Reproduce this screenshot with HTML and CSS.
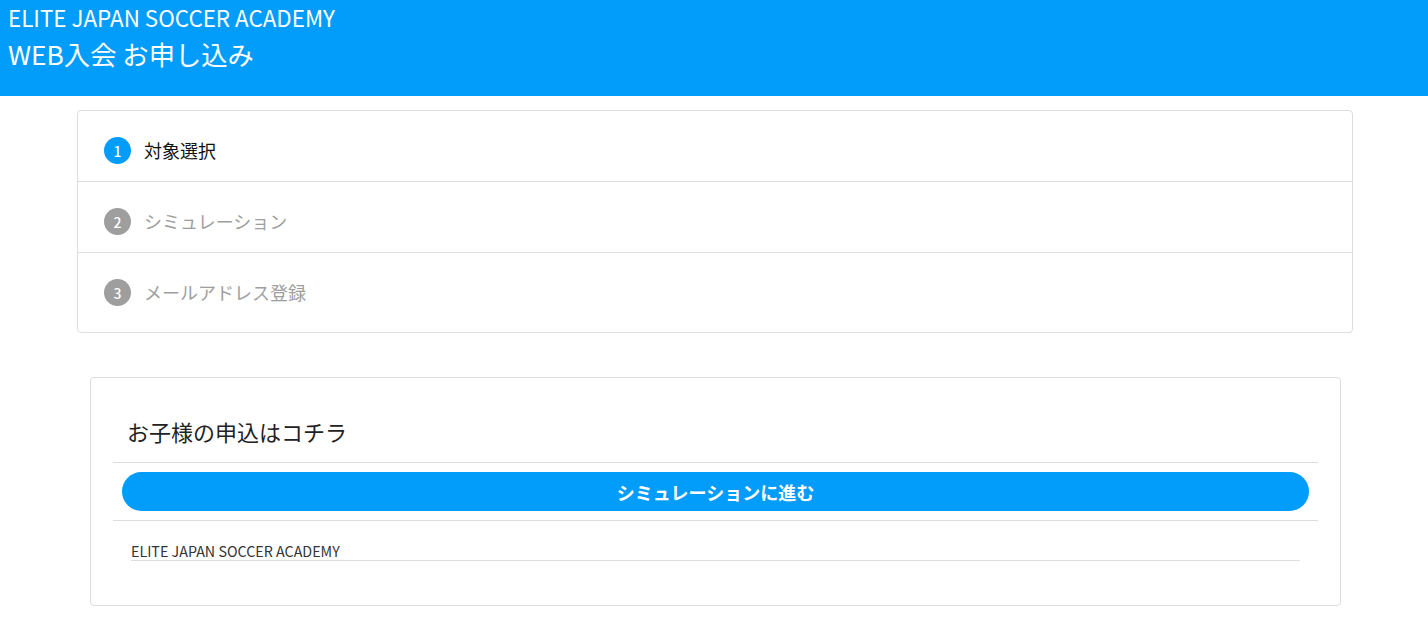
FILE: index.html
```html
<!DOCTYPE html>
<html lang="ja">
<head>
<meta charset="utf-8">
<title>WEB入会 お申し込み</title>
<link rel="stylesheet" href="styles.css">
</head>
<body>
<header class="site-header">
  <div class="brand">ELITE JAPAN SOCCER ACADEMY</div>
  <h1 class="page-title">WEB入会 お申し込み</h1>
</header>
<main>
  <ol class="stepper">
    <li class="step active"><span class="num">1</span><span class="label">対象選択</span></li>
    <li class="step"><span class="num">2</span><span class="label">シミュレーション</span></li>
    <li class="step"><span class="num">3</span><span class="label">メールアドレス登録</span></li>
  </ol>
  <section class="card">
    <h2 class="card-title">お子様の申込はコチラ</h2>
    <div class="card-action"><button class="btn">シミュレーションに進む</button></div>
    <div class="card-footer"><div class="footer-name">ELITE JAPAN SOCCER ACADEMY</div></div>
  </section>
</main>
</body>
</html>
```

FILE: styles.css
```css
* { box-sizing: border-box; }
body {
  margin: 0;
  font-family: "Noto Sans CJK JP", "Noto Sans", sans-serif;
  color: #222;
  background: #fff;
}
.site-header {
  background: #029cfa;
  color: #fff;
  height: 96px;
  padding: 2px 8px 0;
}
.brand { font-size: 22.4px; line-height: 30px; }
.page-title { margin: 0; font-size: 26.3px; font-weight: 400; line-height: 44px; }
main { padding: 14px 0 0; }
.stepper {
  list-style: none;
  margin: 0 75px 0 77px;
  padding: 0 0 9px;
  border: 1px solid #ddd;
  border-radius: 4px;
}
.step {
  display: flex;
  align-items: center;
  gap: 13px;
  padding: 26px 26px 17px;
  border-bottom: 1px solid #ddd;
  color: #9e9e9e;
  font-size: 18px;
}
.step:last-child { border-bottom: none; }
.num {
  width: 27px; height: 27px;
  border-radius: 50%;
  background: #9e9e9e;
  color: #fff;
  font-size: 14px;
  font-weight: 500;
  display: flex; align-items: center; justify-content: center;
}
.label { line-height: 27px; }
.step.active { color: #111; }
.step.active .num { background: #029cfa; }
.card {
  margin: 44px 87px 0 90px;
  border: 1px solid #ddd;
  border-radius: 4px;
  padding: 22px 22px 0;
}
.card-title {
  margin: 0;
  padding: 15px 14px 14px;
  font-size: 22px;
  font-weight: 400;
  line-height: 33px;
  color: #222;
  border-bottom: 1px solid #ddd;
}
.card-action {
  padding: 9px 9px 9px;
  border-bottom: 1px solid #ddd;
}
.btn {
  display: block;
  width: 100%;
  height: 39px;
  border: none;
  border-radius: 20px;
  background: #029cfa;
  color: #fff;
  font-family: inherit;
  font-size: 18px;
  font-weight: 700;
}
.card-footer { padding: 20px 18px 44px; }
.footer-name {
  font-size: 14.3px;
  line-height: 19px;
  color: #333;
  border-bottom: 1px solid #ddd;
}
```
